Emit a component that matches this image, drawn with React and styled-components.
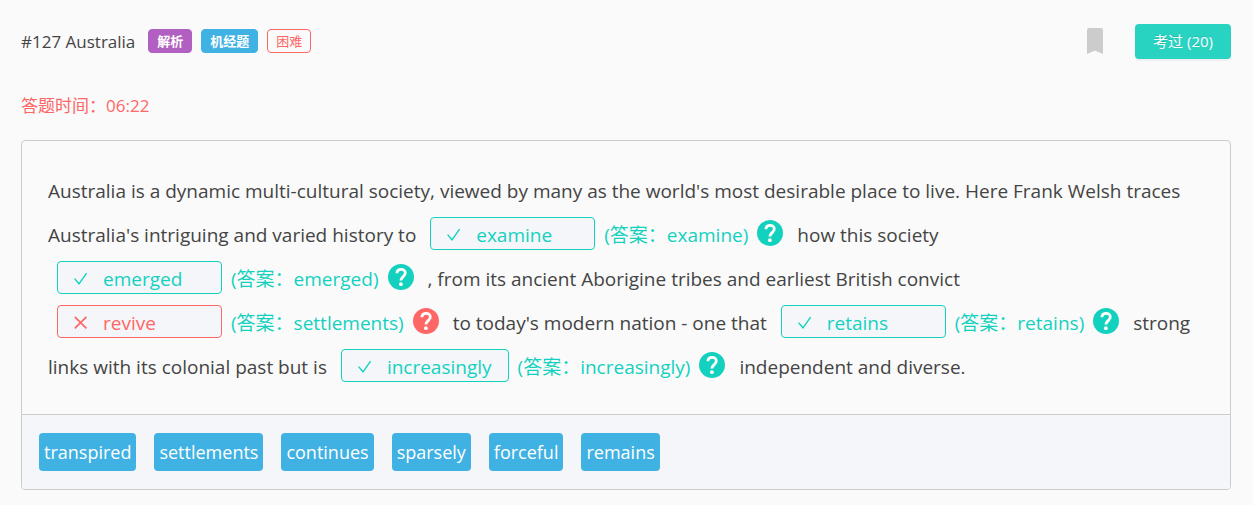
import React from "react";
import styled, { createGlobalStyle } from "styled-components";

const TEAL = "#14d1bf";
const RED = "#ff6666";
const BLUE = "#3fb1e3";

const GlobalStyle = createGlobalStyle`
  * { box-sizing: border-box; }
  body {
    margin: 0;
    background: #fafafa;
    color: #444;
    font-family: "Open Sans", "Noto Sans CJK SC", sans-serif;
  }
  button { font-family: inherit; cursor: pointer; }
`;

const Page = styled.main`
  padding: 24px 22px 15px 21px;
`;

const Header = styled.header`
  display: flex;
  align-items: center;
  height: 35px;
`;

const Title = styled.h1`
  margin: 0 13px 0 0;
  font-size: 17px;
  line-height: 24px;
  font-weight: 400;
`;

const Tags = styled.div`
  display: flex;
  gap: 9px;
  padding-bottom: 1px;
`;

const Tag = styled.span`
  height: 24px;
  padding: 0 8px;
  border: 1px solid ${(p) => p.$border};
  border-radius: 4px;
  background: ${(p) => p.$fill || "transparent"};
  color: ${(p) => (p.$fill ? "#fff" : p.$border)};
  font-size: 13px;
  line-height: 22px;
  font-weight: ${(p) => (p.$fill ? 600 : 400)};
`;

const Actions = styled.div`
  display: flex;
  align-items: center;
  gap: 32px;
  margin-left: auto;
`;

const BookmarkButton = styled.button`
  display: flex;
  padding: 0 0 1px;
  border: 0;
  background: none;
`;

const DoneButton = styled.button`
  height: 35px;
  padding: 0 18px;
  border: 0;
  border-radius: 4px;
  background: #29d3c1;
  color: #fff;
  font-size: 15px;
  line-height: 35px;
  text-shadow: 0 -1px 0 rgba(0, 0, 0, 0.12);
  box-shadow: 0 2px 0 rgba(0, 0, 0, 0.04);
`;

const Timer = styled.p`
  margin: 34px 0 22px;
  color: ${RED};
  font-size: 17px;
  line-height: 25px;
`;

const Card = styled.section`
  border: 1px solid #ccc;
  border-radius: 4px;
  overflow: hidden;
`;

const Passage = styled.p`
  margin: 0;
  padding: 28px 26px 25px;
  font-size: 19px;
  line-height: 44px;
`;

const Group = styled.span`
  display: inline-flex;
  align-items: center;
  height: 44px;
  margin: 0 9px;
  padding-bottom: 3px;
  vertical-align: top;
  line-height: 30px;
  white-space: nowrap;
`;

const Slot = styled.button`
  display: flex;
  align-items: center;
  gap: 15px;
  min-width: 165px;
  height: 33px;
  padding: 2px 16px 0;
  border: 1px solid ${(p) => p.$color};
  border-radius: 4px;
  background: #f4f6f9;
  color: ${(p) => p.$color};
  font-size: 19px;
  line-height: 28px;
`;

const Answer = styled.span`
  margin: 0 9px;
  padding-top: 2px;
  color: ${TEAL};
`;

const HelpButton = styled.button`
  display: flex;
  padding: 0 0 1px;
  border: 0;
  background: none;
  color: ${(p) => p.$color};
`;

const WordBank = styled.div`
  display: flex;
  flex-wrap: wrap;
  gap: 18px;
  padding: 18px 17px;
  border-top: 1px solid #ccc;
  background: #f4f6f9;
`;

const Word = styled.button`
  height: 38px;
  padding: 0 5px;
  border: 0;
  border-radius: 4px;
  background: ${BLUE};
  color: #fff;
  font-size: 18px;
  line-height: 38px;
`;

const CheckIcon = () => (
  <svg width="14" height="14" viewBox="0 0 14 14" fill="none" stroke="currentColor" strokeWidth="1.4" aria-hidden="true">
    <path d="M0.6 6.6 5 11.8 12.6 1.2" />
  </svg>
);

const CrossIcon = () => (
  <svg width="14" height="14" viewBox="0 0 14 14" fill="none" stroke="currentColor" strokeWidth="1.7" aria-hidden="true">
    <path d="M0.8 0.8 12.4 12.4M12.4 0.8 0.8 12.4" />
  </svg>
);

const HelpIcon = () => (
  <svg width="26" height="26" viewBox="0 0 26 26" aria-hidden="true">
    <circle cx="13" cy="13" r="13" fill="currentColor" />
    <path d="M8.9 9.3C9 6.8 10.8 5.4 13.1 5.4s4.2 1.4 4.2 3.7c0 3.4-4.4 3.7-4.4 7.5" fill="none" stroke="#fff" strokeWidth="2.8" />
    <circle cx="12.9" cy="20.2" r="1.9" fill="#fff" />
  </svg>
);

const BookmarkIcon = () => (
  <svg width="16" height="26" viewBox="0 0 16 26" aria-hidden="true">
    <path d="M2 0h12a2 2 0 0 1 2 2v24l-8-3.4L0 26V2a2 2 0 0 1 2-2Z" fill="#ccc" />
  </svg>
);

function Blank({ word, answer }) {
  const correct = word === answer;
  const color = correct ? TEAL : RED;
  return (
    <Group>
      <Slot type="button" $color={color}>
        {correct ? <CheckIcon /> : <CrossIcon />}
        {word}
      </Slot>
      <Answer>(答案：{answer})</Answer>
      <HelpButton type="button" $color={color} aria-label={`${answer} 解析`}>
        <HelpIcon />
      </HelpButton>
    </Group>
  );
}

const words = ["transpired", "settlements", "continues", "sparsely", "forceful", "remains"];

export default function App() {
  return (
    <>
      <GlobalStyle />
      <Page>
        <Header>
          <Title>#127 Australia</Title>
          <Tags>
            <Tag $fill="#b15fc0" $border="#b15fc0">解析</Tag>
            <Tag $fill={BLUE} $border={BLUE}>机经题</Tag>
            <Tag $border={RED}>困难</Tag>
          </Tags>
          <Actions>
            <BookmarkButton type="button" aria-label="收藏">
              <BookmarkIcon />
            </BookmarkButton>
            <DoneButton type="button">考过 (20)</DoneButton>
          </Actions>
        </Header>
        <Timer>答题时间：06:22</Timer>
        <Card>
          <Passage>
            Australia is a dynamic multi-cultural society, viewed by many as the world's most desirable place to
            live. Here Frank Welsh traces Australia's intriguing and varied history to{" "}
            <Blank word="examine" answer="examine" /> how this society{" "}
            <Blank word="emerged" answer="emerged" /> , from its ancient Aborigine tribes and earliest British
            convict <Blank word="revive" answer="settlements" /> to today's modern nation - one that{" "}
            <Blank word="retains" answer="retains" /> strong links with its colonial past but is{" "}
            <Blank word="increasingly" answer="increasingly" /> independent and diverse.
          </Passage>
          <WordBank>
            {words.map((word) => (
              <Word type="button" key={word}>{word}</Word>
            ))}
          </WordBank>
        </Card>
      </Page>
    </>
  );
}
